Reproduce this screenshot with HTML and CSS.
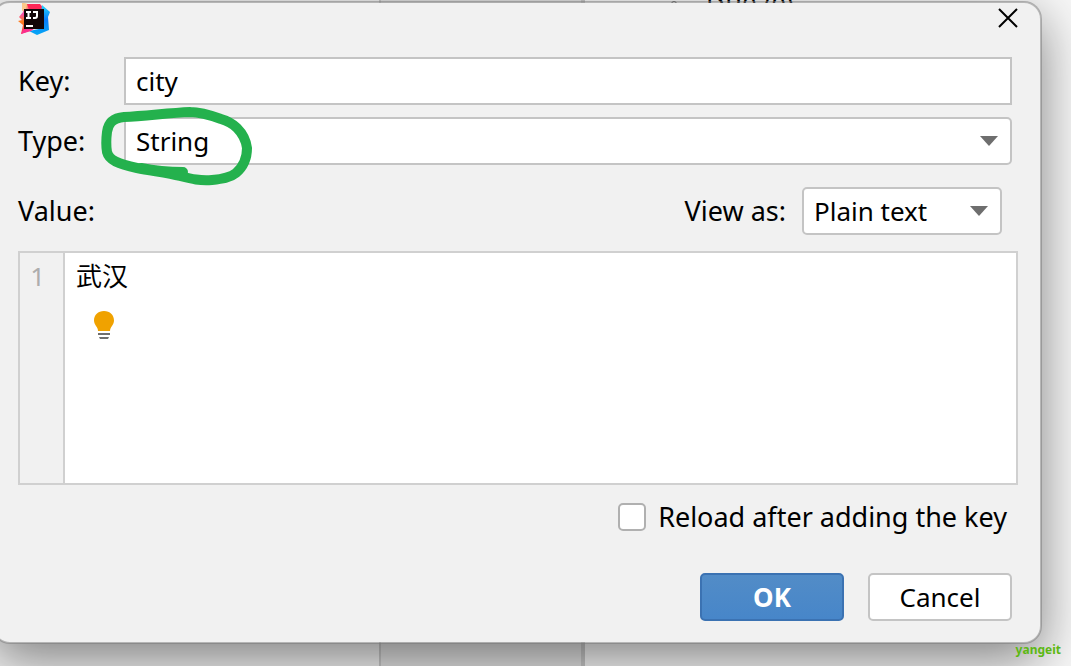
FILE: index.html
```
<!DOCTYPE html>
<html lang="en">
<head>
  <meta charset="UTF-8" />
  <meta name="viewport" content="width=device-width, initial-scale=1" />
  <title>Add Key</title>
  <link rel="stylesheet" href="styles.css">
</head>
<body>

  <div class="workspace">
    <div class="pane pane-tree"></div>
    <div class="pane pane-middle"></div>
    <div class="pane pane-keys">
      <span class="db-dot"></span>
      <span class="db-name">DB0 (0)</span>
    </div>
  </div>

  <form class="dialog">
    <div class="titlebar">
      <svg class="logo" viewBox="0 0 32 32" aria-hidden="true">
        <defs>
          <linearGradient id="warm" x1="0" y1="0" x2="0" y2="1">
            <stop offset="0" stop-color="#fdb94e" />
            <stop offset="0.35" stop-color="#fb4fb0" />
            <stop offset="0.6" stop-color="#fc801d" />
            <stop offset="1" stop-color="#fe2857" />
          </linearGradient>
          <linearGradient id="cool" x1="0" y1="0" x2="0" y2="1">
            <stop offset="0" stop-color="#27d7fc" />
            <stop offset="0.5" stop-color="#087cfa" />
            <stop offset="1" stop-color="#07a8f5" />
          </linearGradient>
        </defs>
        <path fill="url(#warm)" d="M4 0l6 1 4 5v20l-3 2-8 3 2-9-5-4 4-1-3-3 4-5z" />
        <path fill="#fe2857" d="M9 1h13l5 6H11z" />
        <path fill="#fdc98a" d="M4 0l5 1-1 6-4 1z" />
        <path fill="url(#cool)" d="M24 2l8 7-2 5 1 13-12 5-8-4 10-2z" />
        <path fill="#fb2e8c" d="M3 31l3-6h11l-4 3z" />
        <path fill="#120608" d="M6 6h20v20H6z" />
        <path fill="none" stroke="#fff" stroke-width="2" d="M8 9h5M8 15h5M15 9h4v4q0 2-2 2h-2M8 23h7" />
        <path fill="#fff" d="M9.500 9h2v6h-2z" />
      </svg>
      <button type="button" class="close" aria-label="Close">
        <svg viewBox="0 0 20 20"><path d="M1 1l18 18M19 1L1 19" /></svg>
      </button>
    </div>

    <div class="row">
      <label class="row-label" for="key">Key:</label>
      <input class="field text-field" id="key" type="text" value="city" />
    </div>

    <div class="row">
      <label class="row-label" for="type">Type:</label>
      <div class="dropdown type-dropdown">
        <select class="field" id="type">
          <option>String</option>
        </select>
        <svg class="marker" viewBox="0 0 152 80" aria-hidden="true">
          <path d="M90 6C68 7 46 10 24 11C12 12 8 18 7 26C6 34 6 40 7 46C9 54 18 58 37 62C52 65 68 67 80 70C92 73 100 75 112 74C122 73 130 72 136 67C143 61 147 52 147 42C146 34 142 27 137 22C132 17 128 15 121 13C110 9 100 6 90 6M41 62C56 65 70 66 83 66" />
        </svg>
      </div>
    </div>

    <div class="value-head">
      <label for="value">Value:</label>
      <div class="view-as">
        <label for="view">View as:</label>
        <div class="dropdown view-dropdown">
          <select class="field" id="view">
            <option>Plain text</option>
          </select>
        </div>
      </div>
    </div>

    <div class="editor">
      <div class="gutter">1</div>
      <textarea class="code" id="value" spellcheck="false">武汉</textarea>
      <svg class="bulb" viewBox="0 0 20 28" aria-hidden="true">
        <path fill="#f0a200" d="M10 0C4 0 0 4 0 9.500C0 14 4 16 4 20H16C16 16 20 14 20 9.500C20 4 16 0 10 0z" />
        <path fill="#6e6e6e" d="M4 22h12v2H4zM5 26h10l-1 2H6z" />
      </svg>
    </div>

    <div class="reload">
      <input class="check" id="reload" type="checkbox" />
      <label for="reload">Reload after adding the key</label>
    </div>

    <div class="actions">
      <button type="button" class="btn btn-ok">OK</button>
      <button type="button" class="btn">Cancel</button>
    </div>
  </form>

  <div class="watermark">yangeit</div>

</body>
</html>
```

FILE: styles.css
```
* {
  box-sizing: border-box;
}

body {
  margin: 0;
  min-height: 100vh;
  position: relative;
  overflow: hidden;
  font-family: "Noto Sans", "Noto Sans CJK SC", sans-serif;
  font-size: 26px;
  line-height: 36px;
  color: #000;
  background: #f7f7f7;
}

label {
  font-size: 27px;
}

/* window behind the dialog */
.workspace {
  position: absolute;
  inset: 0;
  display: flex;
}

.pane {
  border-right: 2px solid #c8c8c8;
  background: #f2f2f2;
}

.pane-tree {
  width: 381px;
}

.pane-middle {
  width: 204px;
  border-right: 4px solid #c8c8c8;
  background: #e2e2e2;
}

.pane-keys {
  flex: 1;
  border-right: none;
  background: #f7f7f7;
}

.db-dot {
  position: absolute;
  top: 1px;
  left: 671px;
  width: 6px;
  height: 6px;
  border: 1px solid #555;
  border-radius: 50%;
}

.db-name {
  position: absolute;
  top: -13px;
  left: 706px;
}

.dialog {
  position: relative;
  margin: 1px 29px 22px -8px;
  padding: 0 22px 21px 24px;
  border: 2px solid rgba(120, 120, 120, 0.5);
  border-radius: 18px;
  background: #f1f1f1;
  background-clip: padding-box;
  box-shadow: 0 16px 52px rgba(0, 0, 0, 0.47);
}

.titlebar {
  display: flex;
  justify-content: space-between;
  align-items: flex-start;
  height: 54px;
}

.logo {
  width: 32px;
  height: 32px;
}

.close {
  margin: 5px 0 0;
  padding: 0;
  border: none;
  background: none;
  line-height: 0;
}

.close svg {
  width: 20px;
  height: 20px;
  fill: none;
  stroke: #000;
  stroke-width: 2;
}

.row {
  display: flex;
  align-items: center;
  margin: 0 6px 12px 0;
}

.row-label {
  width: 106px;
}

.field {
  width: 100%;
  height: 48px;
  padding: 0 10px;
  border: 2px solid #c4c4c4;
  border-radius: 5px;
  background: #fff;
  color: #000;
  font: inherit;
  appearance: none;
  outline: none;
}

.text-field {
  flex: 1;
  border-radius: 0;
}

.dropdown {
  position: relative;
  display: flex;
}

.dropdown::after {
  content: "";
  position: absolute;
  top: 19px;
  right: 14px;
  border: 9px solid transparent;
  border-top: 10px solid #6e6e6e;
  border-bottom: none;
}

.type-dropdown {
  flex: 1;
}

.view-dropdown {
  width: 200px;
}

/* hand-drawn ring round the type */
.marker {
  position: absolute;
  top: -11px;
  left: -24px;
  width: 152px;
  height: 80px;
  fill: none;
  stroke: #24b14d;
  stroke-width: 10;
  stroke-linecap: round;
  stroke-linejoin: round;
  pointer-events: none;
}

.value-head {
  display: flex;
  justify-content: space-between;
  align-items: center;
  margin: 22px 16px 16px 0;
}

.view-as {
  display: flex;
  align-items: center;
  gap: 16px;
}

.editor {
  position: relative;
  display: flex;
  height: 234px;
  border: 2px solid #d0d0d0;
  background: #fff;
}

.gutter {
  width: 45px;
  padding: 5px 18px 0 0;
  border-right: 2px solid #d0d0d0;
  background: #f1f1f1;
  color: #adadad;
  text-align: right;
}

.code {
  flex: 1;
  padding: 5px 11px;
  border: none;
  background: none;
  color: #000;
  font: inherit;
  resize: none;
  outline: none;
}

.bulb {
  position: absolute;
  top: 58px;
  left: 74px;
  width: 20px;
  height: 28px;
}

.reload {
  display: flex;
  justify-content: flex-end;
  align-items: center;
  gap: 12px;
  margin: 14px 11px 38px 0;
}

.check {
  width: 28px;
  height: 28px;
  margin: 0;
  border: 2px solid #b0b0b0;
  border-radius: 5px;
  background: #fff;
  appearance: none;
}

.actions {
  display: flex;
  justify-content: flex-end;
  gap: 24px;
  margin-right: 6px;
}

.btn {
  width: 144px;
  height: 48px;
  padding: 0;
  border: 2px solid #c4c4c4;
  border-radius: 5px;
  background: #fff;
  color: #000;
  font: inherit;
}

.btn-ok {
  border-color: #3b72b2;
  background: linear-gradient(#528cc7, #4786c9);
  color: #fff;
  font-weight: bold;
}

.watermark {
  position: absolute;
  right: 10px;
  bottom: 8px;
  color: #5cb813;
  font-size: 12px;
  font-weight: bold;
  line-height: 16px;
}
```
